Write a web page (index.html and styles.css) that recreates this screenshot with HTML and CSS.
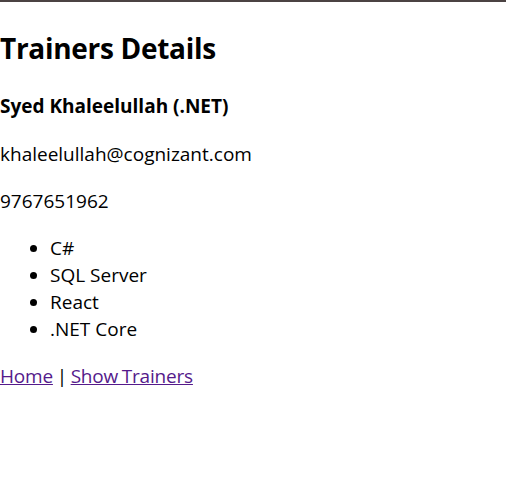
FILE: index.html
```html
<!DOCTYPE html>
<html lang="en">
<head>
<meta charset="utf-8">
<title>Trainers Details</title>
<link rel="stylesheet" href="styles.css">
</head>
<body>
<div class="page">
  <h1 class="title">Trainers Details</h1>
  <h3 class="name">Syed Khaleelullah (.NET)</h3>
  <p class="line">khaleelullah@cognizant.com</p>
  <p class="line">9767651962</p>
  <ul class="skills">
    <li>C#</li>
    <li>SQL Server</li>
    <li>React</li>
    <li>.NET Core</li>
  </ul>
  <p class="line nav"><a class="link" href="#home">Home</a> | <a class="link" href="#trainers">Show Trainers</a></p>
</div>
</body>
</html>
```

FILE: styles.css
```css
html, body {
  margin: 0;
  padding: 0;
  background: #ffffff;
}

.page {
  border-top: 2px solid #4b4343;
  font-family: "Open Sans", "Noto Sans", sans-serif;
  font-size: 19px;
  line-height: 27px;
  color: #000000;
  padding-bottom: 40px;
}

.title {
  font-size: 28px;
  font-weight: 700;
  line-height: 43px;
  margin: 25px 0 0;
  letter-spacing: -0.3px;
}

.name {
  font-size: 19px;
  font-weight: 700;
  line-height: 27px;
  margin: 23px 0 21px;
}

.line {
  margin: 20px 0;
}

.nav {
  word-spacing: -1px;
  letter-spacing: -0.2px;
}

.skills {
  margin: 19px 0 20px;
  padding-left: 50px;
}

.link {
  color: #551a8b;
  text-decoration: underline;
}
```
